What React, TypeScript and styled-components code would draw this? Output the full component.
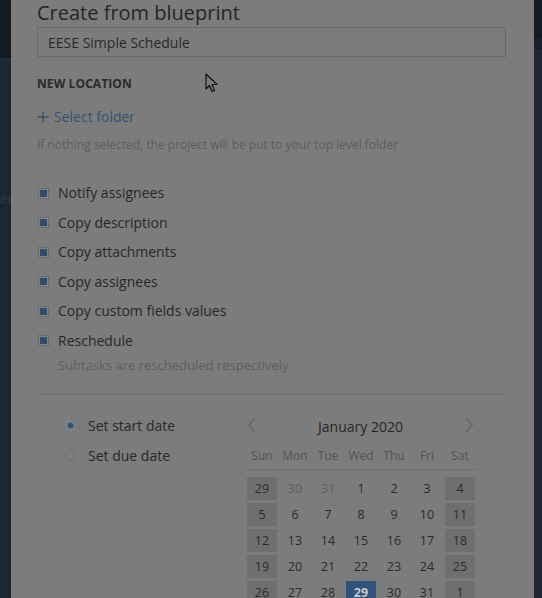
import React from "react";
import styled, { createGlobalStyle } from "styled-components";

const Global = createGlobalStyle`
  html, body { margin: 0; padding: 0; }
  body {
    background: #1c2530;
    font-family: "Open Sans", "Noto Sans", sans-serif;
    overflow: hidden;
  }
`;

const Page = styled.div`
  position: relative;
  width: 542px;
  height: 598px;
  overflow: hidden;
  background: #1d2732;
`;

const Backdrop = styled.div`
  position: absolute;
  inset: 0;
  display: flex;
  justify-content: space-between;
`;

const Side = styled.div<{ $head: number; $band: number }>`
  width: ${(p) => (p.$band ? 20 : 11)}px;
  display: flex;
  flex-direction: column;
  &::before {
    content: "";
    height: ${(p) => p.$head}px;
    background: #121a22;
    flex: none;
  }
  &::after {
    content: "";
    height: ${(p) => p.$band}px;
    background: #18212b;
    border-bottom: 1px solid #27313c;
    flex: none;
  }
`;

const SideText = styled.div`
  order: 3;
  margin-top: 130px;
  font-size: 14px;
  color: #2c3744;
  white-space: nowrap;
  overflow: hidden;
`;

const Dialog = styled.div`
  position: absolute;
  left: 11px;
  top: 0;
  width: 523px;
  height: 598px;
  overflow: hidden;
  background: #7c7c7c;
  box-sizing: border-box;
  padding: 0 28px 0 26px;
  color: #272727;
  display: flex;
  flex-direction: column;
  & > * { flex-shrink: 0; }
`;

const Title = styled.h1`
  margin: 0;
  font-size: 20px;
  line-height: 27px;
  font-weight: 400;
  color: #262626;
  margin-top: -1px;
`;

const Input = styled.div`
  margin-top: 1px;
  height: 28px;
  border: 1px solid #6a6a6a;
  box-sizing: content-box;
  display: flex;
  align-items: center;
  padding: 0 10px;
  font-size: 14px;
  color: #2a2a2a;
`;

const SectionLabel = styled.div`
  margin-top: 19px;
  font-size: 12px;
  font-weight: 700;
  letter-spacing: 0.1px;
  color: #2b2b2b;
  line-height: 16px;
`;

const AddLink = styled.div`
  margin-top: 15px;
  display: flex;
  align-items: center;
  gap: 5px;
  font-size: 14px;
  line-height: 20px;
  color: #34526f;
`;

const Hint = styled.div`
  margin-top: 10px;
  font-size: 12px;
  line-height: 16px;
  color: #5d5d5d;
`;

const Checks = styled.div`
  margin-top: 30px;
  display: flex;
  flex-direction: column;
  gap: 9.6px;
`;

const CheckRow = styled.div`
  display: flex;
  align-items: center;
  gap: 9px;
  font-size: 14px;
  line-height: 20px;
  color: #282828;
  padding-left: 1px;
`;

const Box = styled.span`
  width: 11px;
  height: 11px;
  box-sizing: border-box;
  border: 1px solid #6b6b6b;
  background: #848484;
  padding: 1px;
  display: inline-flex;
  flex: none;
  &::after {
    content: "";
    flex: 1;
    background: #2e4d6f;
  }
`;

const SubNote = styled.div`
  margin-top: 5px;
  padding-left: 21px;
  font-size: 13px;
  line-height: 18px;
  color: #5e5e5e;
`;

const Divider = styled.div`
  margin-top: 20px;
  height: 1px;
  background: #6f6f6f;
`;

const DateArea = styled.div`
  margin-top: 20px;
  display: flex;
`;

const Radios = styled.div`
  width: 208px;
  box-sizing: border-box;
  padding-left: 28px;
  padding-top: 1px;
  display: flex;
  flex-direction: column;
  gap: 10px;
`;

const RadioRow = styled.div`
  display: flex;
  align-items: center;
  gap: 12px;
  font-size: 14px;
  line-height: 20px;
  color: #282828;
`;

const Radio = styled.span<{ $on?: boolean }>`
  width: 11px;
  height: 11px;
  border-radius: 50%;
  box-sizing: border-box;
  border: 1px solid ${(p) => (p.$on ? "#8c8c8c" : "#6d6d6d")};
  background: ${(p) => (p.$on ? "#2f5479" : "transparent")};
  box-shadow: ${(p) => (p.$on ? "inset 0 0 0 1.5px #858585" : "none")};
  flex: none;
`;

const Calendar = styled.div`
  width: 232px;
  display: flex;
  flex-direction: column;
`;

const CalHead = styled.div`
  display: flex;
  align-items: center;
  justify-content: space-between;
  height: 20px;
  padding: 0 2px 0 1px;
`;

const MonthTitle = styled.div`
  font-size: 14px;
  line-height: 20px;
  color: #272727;
  margin-top: 5px;
`;

const Arrow = styled.svg`
  width: 12px;
  height: 18px;
  display: block;
`;

const WeekRow = styled.div`
  margin-top: 13px;
  display: grid;
  grid-template-columns: repeat(7, 30px);
  column-gap: 3px;
  padding: 0 0 5px 2px;
  border-bottom: 1px solid #6f6f6f;
`;

const WeekDay = styled.div`
  text-align: center;
  font-size: 12px;
  line-height: 16px;
  color: #545454;
`;

const Grid = styled.div`
  margin-top: 7px;
  display: grid;
  grid-template-columns: repeat(7, 30px);
  grid-auto-rows: 23px;
  column-gap: 3px;
  row-gap: 3px;
  padding-left: 2px;
`;

const Day = styled.div<{ $weekend?: boolean; $muted?: boolean; $sel?: boolean }>`
  display: flex;
  align-items: center;
  justify-content: center;
  font-size: 12.5px;
  background: ${(p) => (p.$sel ? "#2f5479" : p.$weekend ? "#6f6f6f" : "transparent")};
  color: ${(p) => (p.$sel ? "#c9c9c9" : p.$muted ? "#5f5f5f" : "#2b2b2b")};
  font-weight: ${(p) => (p.$sel ? 700 : 400)};
  text-decoration: ${(p) => (p.$sel ? "underline" : "none")};
`;

const Cursor = styled.svg`
  position: absolute;
  left: 205px;
  top: 73px;
  width: 14px;
  height: 21px;
`;

const labels = [
  "Notify assignees",
  "Copy description",
  "Copy attachments",
  "Copy assignees",
  "Copy custom fields values",
  "Reschedule",
];

const days: { d: number; m?: boolean; s?: boolean }[] = [
  { d: 29 }, { d: 30, m: true }, { d: 31, m: true }, { d: 1 }, { d: 2 }, { d: 3 }, { d: 4 },
  { d: 5 }, { d: 6 }, { d: 7 }, { d: 8 }, { d: 9 }, { d: 10 }, { d: 11 },
  { d: 12 }, { d: 13 }, { d: 14 }, { d: 15 }, { d: 16 }, { d: 17 }, { d: 18 },
  { d: 19 }, { d: 20 }, { d: 21 }, { d: 22 }, { d: 23 }, { d: 24 }, { d: 25 },
  { d: 26 }, { d: 27 }, { d: 28 }, { d: 29, s: true }, { d: 30 }, { d: 31 }, { d: 1 },
];

export default function App() {
  return (
    <Page>
      <Global />
      <Backdrop>
        <Side $head={58} $band={0}>
          <SideText>ee</SideText>
        </Side>
        <Side $head={38} $band={12} />
      </Backdrop>
      <Dialog>
        <Title>Create from blueprint</Title>
        <Input>EESE Simple Schedule</Input>
        <SectionLabel>NEW LOCATION</SectionLabel>
        <AddLink>
          <svg width="12" height="12" viewBox="0 0 12 12">
            <path d="M6 0.5V11.5M0.5 6H11.5" stroke="#34526f" strokeWidth="1.3" />
          </svg>
          Select folder
        </AddLink>
        <Hint>If nothing selected, the project will be put to your top level folder</Hint>
        <Checks>
          {labels.map((l) => (
            <CheckRow key={l}>
              <Box />
              {l}
            </CheckRow>
          ))}
        </Checks>
        <SubNote>Subtasks are rescheduled respectively</SubNote>
        <Divider />
        <DateArea>
          <Radios>
            <RadioRow>
              <Radio $on />
              Set start date
            </RadioRow>
            <RadioRow>
              <Radio />
              Set due date
            </RadioRow>
          </Radios>
          <Calendar>
            <CalHead>
              <Arrow viewBox="0 0 12 18">
                <path d="M9 2L3 9L9 16" fill="none" stroke="#6c6c6c" strokeWidth="2.2" />
              </Arrow>
              <MonthTitle>January 2020</MonthTitle>
              <Arrow viewBox="0 0 12 18">
                <path d="M3 2L9 9L3 16" fill="none" stroke="#6c6c6c" strokeWidth="2.2" />
              </Arrow>
            </CalHead>
            <WeekRow>
              {["Sun", "Mon", "Tue", "Wed", "Thu", "Fri", "Sat"].map((w) => (
                <WeekDay key={w}>{w}</WeekDay>
              ))}
            </WeekRow>
            <Grid>
              {days.map((x, i) => (
                <Day
                  key={i}
                  $weekend={i % 7 === 0 || i % 7 === 6}
                  $muted={x.m}
                  $sel={x.s}
                >
                  {x.d}
                </Day>
              ))}
            </Grid>
          </Calendar>
        </DateArea>
      </Dialog>
      <Cursor viewBox="0 0 14 21">
        <path
          d="M1 1L1 16L4.5 12.5L7 18.5L9.5 17.5L7 11.5L12 11.5Z"
          fill="#7c7c7c"
          stroke="#111"
          strokeWidth="1.2"
          strokeLinejoin="round"
        />
      </Cursor>
    </Page>
  );
}
